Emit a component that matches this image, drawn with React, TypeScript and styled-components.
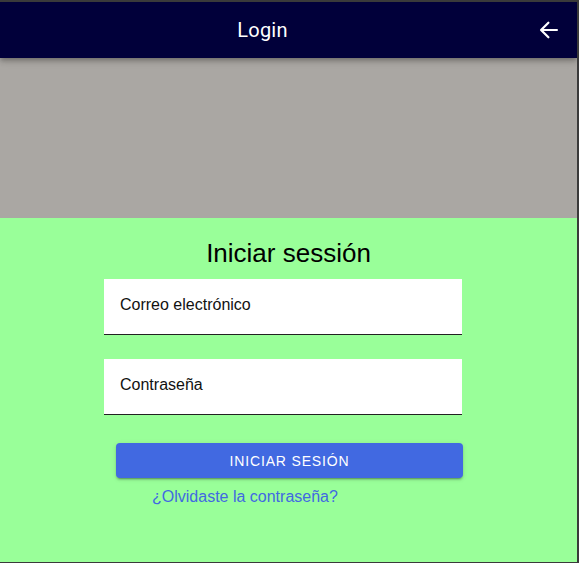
import React from "react";
import styled, { createGlobalStyle } from "styled-components";

const Global = createGlobalStyle`
  html, body { margin: 0; padding: 0; }
  body { font-family: "Liberation Sans", Arial, sans-serif; background: #ffffff; }
  * { box-sizing: border-box; }
`;

const Frame = styled.div`
  width: 579px;
  height: 563px;
  display: flex;
  flex-direction: column;
  border-top: 2px solid #3a3a3a;
  border-right: 2px solid #3a3a3a;
  border-bottom: 1px solid #3a3a3a;
  overflow: hidden;
`;

const Toolbar = styled.header`
  position: relative;
  z-index: 2;
  height: 56px;
  flex: 0 0 56px;
  display: flex;
  align-items: center;
  background: #01003a;
  box-shadow: 0 2px 4px -1px rgba(0, 0, 0, 0.2), 0 4px 5px 0 rgba(0, 0, 0, 0.14),
    0 1px 10px 0 rgba(0, 0, 0, 0.12);
`;

const ToolbarTitle = styled.h1`
  flex: 1;
  margin: 0;
  text-align: center;
  color: #ffffff;
  font-family: Roboto, "Liberation Sans", sans-serif;
  font-size: 20px;
  font-weight: 400;
  letter-spacing: 0.0125em;
`;

const IconButton = styled.button`
  width: 48px;
  height: 48px;
  margin-right: 4px;
  padding: 0;
  border: none;
  background: transparent;
  display: flex;
  align-items: center;
  justify-content: center;
  cursor: pointer;
  color: #ffffff;
`;

const Banner = styled.div`
  height: 160px;
  flex: 0 0 160px;
  background: #aaa7a3;
`;

const Main = styled.main`
  flex: 1;
  background: #99ff99;
  display: flex;
  flex-direction: column;
  padding-top: 20px;
`;

const Heading = styled.h2`
  margin: 0 0 11px;
  text-align: center;
  font-size: 26px;
  line-height: 30px;
  font-weight: 400;
  color: #000000;
`;

const Form = styled.form`
  display: flex;
  flex-direction: column;
  align-items: flex-start;
`;

const Field = styled.input<{ $gap?: number }>`
  display: block;
  width: 358px;
  height: 56px;
  margin: 0 0 ${(p) => p.$gap ?? 0}px 104px;
  padding: 0 16px 3px;
  border: none;
  border-bottom: 1px solid #222222;
  border-radius: 0;
  background: #ffffff;
  font-family: "Liberation Sans", Arial, sans-serif;
  font-size: 16px;
  color: #111111;
  outline: none;
  &::placeholder {
    color: #111111;
    opacity: 1;
  }
`;

const SubmitButton = styled.button`
  width: 347px;
  height: 35px;
  margin: 28px 0 0 116px;
  border: none;
  border-radius: 4px;
  background: #4169e1;
  color: #ffffff;
  font-family: "Liberation Sans", Arial, sans-serif;
  font-size: 14px;
  font-weight: 500;
  letter-spacing: 0.06em;
  text-transform: uppercase;
  display: flex;
  align-items: center;
  justify-content: center;
  box-shadow: 0 3px 1px -2px rgba(0, 0, 0, 0.2), 0 2px 2px 0 rgba(0, 0, 0, 0.14),
    0 1px 5px 0 rgba(0, 0, 0, 0.12);
  cursor: pointer;
`;

const ForgotLink = styled.a`
  margin: 10px 0 0 152px;
  font-size: 16px;
  color: #4169e1;
  text-decoration: none;
  cursor: pointer;
`;

const ArrowBack = () => (
  <svg width="26" height="26" viewBox="0 0 512 512" aria-hidden="true">
    <path
      d="M244 400L100 256l144-144M120 256h292"
      fill="none"
      stroke="currentColor"
      strokeLinecap="round"
      strokeLinejoin="round"
      strokeWidth="44"
    />
  </svg>
);

export default function App() {
  return (
    <>
      <Global />
      <Frame>
        <Toolbar>
          <ToolbarTitle>Login</ToolbarTitle>
          <IconButton aria-label="Volver">
            <ArrowBack />
          </IconButton>
        </Toolbar>
        <Banner />
        <Main>
          <Heading>Iniciar sessión</Heading>
          <Form onSubmit={(e) => e.preventDefault()}>
            <Field type="email" placeholder="Correo electrónico" $gap={24} />
            <Field type="password" placeholder="Contraseña" />
            <SubmitButton type="submit">Iniciar sesión</SubmitButton>
            <ForgotLink>¿Olvidaste la contraseña?</ForgotLink>
          </Form>
        </Main>
      </Frame>
    </>
  );
}
